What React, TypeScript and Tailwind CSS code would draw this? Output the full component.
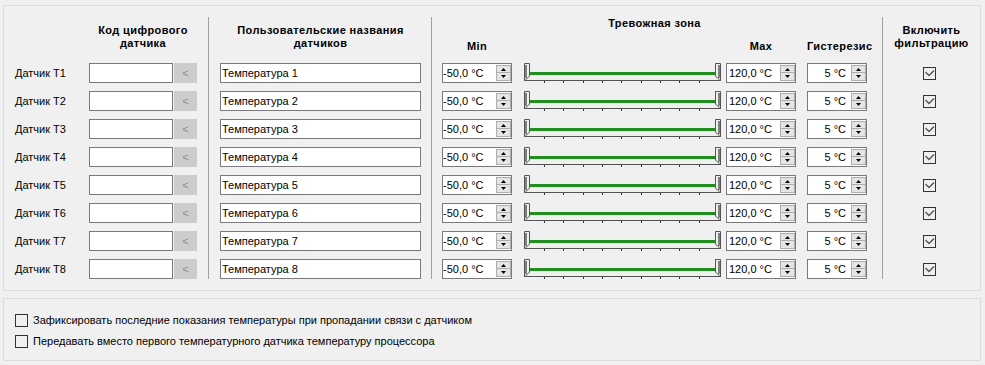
import React from 'react';

const rows = [1, 2, 3, 4, 5, 6, 7, 8];

function Arrows() {
  return (
    <div className="my-[1px] flex w-[15px] flex-col">
      <div className="flex h-[8px] items-center justify-center border border-[#adadad] bg-[#e5e5e5]">
        <svg width="5" height="3" viewBox="0 0 5 3" className="block">
          <path d="M2.5 0 L5 3 L0 3 Z" fill="#000" />
        </svg>
      </div>
      <div className="flex h-[8px] items-center justify-center border border-t-0 border-[#adadad] bg-[#e5e5e5]">
        <svg width="5" height="3" viewBox="0 0 5 3" className="block">
          <path d="M0 0 L5 0 L2.5 3 Z" fill="#000" />
        </svg>
      </div>
    </div>
  );
}

function Spin({ value, box, text }: { value: string; box: string; text: string }) {
  return (
    <div className={box}>
      <div className={text}>{value}</div>
      <Arrows />
    </div>
  );
}

function Slider() {
  const ticks = [1, 2, 3, 4, 5, 6, 7, 8, 9].map((i) => Math.round(0.67 + i * 19.33) + 0.5);
  return (
    <svg width="197" height="20" viewBox="0 0 197 20" className="block">
      <line x1="0" y1="17.5" x2="197" y2="17.5" stroke="#555" />
      {ticks.map((x) => (
        <line key={x} x1={x} y1="18" x2={x} y2="20" stroke="#333" />
      ))}
      <rect x="6" y="9" width="185" height="3" fill="#1f8d1f" />
      <path d="M0.5 17.5 V0.5 H5.5 V13 L1 17.5 Z" fill="#f0f0f0" stroke="#555" />
      <path d="M2 15 V2" stroke="#111" />
      <path d="M196.5 17.5 V0.5 H191.5 V13 L196 17.5 Z" fill="#f0f0f0" stroke="#555" />
      <path d="M195 15 V2" stroke="#111" />
    </svg>
  );
}

function Check({ checked }: { checked: boolean }) {
  return (
    <div className="h-[13px] w-[13px] shrink-0 border border-[#333] bg-[#f0f0f0]">
      {checked && (
        <svg width="11" height="11" viewBox="0 0 11 11" className="block">
          <polyline points="1.5,4 5,7.5 10,2.5" fill="none" stroke="#555" strokeWidth="1.4" />
        </svg>
      )}
    </div>
  );
}

function Sep({ cls }: { cls: string }) {
  return <div className={cls} />;
}

export default function App() {
  return (
    <div className="min-h-[365px] w-[985px] bg-[#f0f0f0] pl-[3px] pt-[5px] font-['Liberation_Sans',Arial,sans-serif] text-[11px] leading-[13px] text-black">
      {/* top group */}
      <div className="flex h-[286px] w-[978px] border border-[#dcdcdc] pb-[11px] pl-[11px] pt-[11px]">
        {/* labels */}
        <div className="flex w-[74px] flex-col gap-[8px]">
          <div className="h-[38px]" />
          {rows.map((r) => (
            <div key={r} className="flex h-[20px] items-center">
              Датчик T{r}
            </div>
          ))}
        </div>
        {/* code */}
        <div className="flex w-[108px] flex-col gap-[8px]">
          <div className="h-[38px] pt-[7px] text-center font-bold tracking-[0.4px]">
            Код цифрового
            <br />
            датчика
          </div>
          {rows.map((r) => (
            <div key={r} className="flex h-[20px]">
              <div className="h-[20px] w-[84px] border border-[#7a7a7a] bg-white" />
              <div className="ml-[1px] flex h-[20px] w-[23px] items-center justify-center bg-[#cccccc] text-[#8a8a8a]">
                &lt;
              </div>
            </div>
          ))}
        </div>
        <Sep cls="ml-[11px] mr-[11px] w-[1px] bg-[#a0a0a0]" />
        {/* names */}
        <div className="flex w-[201px] flex-col gap-[8px]">
          <div className="h-[38px] pt-[7px] text-center font-bold tracking-[0.4px]">
            Пользовательские названия
            <br />
            датчиков
          </div>
          {rows.map((r) => (
            <div key={r} className="flex h-[20px] items-center border border-[#7a7a7a] bg-white pl-[1px]">
              Температура {r}
            </div>
          ))}
        </div>
        <Sep cls="ml-[10px] mr-[10px] w-[1px] bg-[#a0a0a0]" />
        {/* alarm */}
        <div className="flex w-[425px] flex-col gap-[8px]">
          <div className="flex h-[38px] flex-col font-bold tracking-[0.4px]">
            <div className="text-center">Тревожная зона</div>
            <div className="mt-[10px] flex">
              <div className="w-[70px] text-center">Min</div>
              <div className="ml-[12px] w-[197px]" />
              <div className="ml-[5px] w-[70px] text-center">Max</div>
              <div className="ml-[11px] w-[60px] text-center">Гистерезис</div>
            </div>
          </div>
          {rows.map((r) => (
            <div key={r} className="flex h-[20px]">
              <Spin
                value="-50,0 °C"
                box="flex h-[20px] w-[70px] border border-[#7a7a7a] bg-white"
                text="flex flex-1 items-center pl-[0px]"
              />
              <div className="ml-[12px]">
                <Slider />
              </div>
              <div className="ml-[5px]">
                <Spin
                  value="120,0 °C"
                  box="flex h-[20px] w-[70px] border border-[#7a7a7a] bg-white"
                  text="flex flex-1 items-center pl-[2px]"
                />
              </div>
              <div className="ml-[11px]">
                <Spin
                  value="5 °C"
                  box="flex h-[20px] w-[60px] border border-[#7a7a7a] bg-white"
                  text="flex flex-1 items-center justify-end pr-[5px]"
                />
              </div>
            </div>
          ))}
        </div>
        <Sep cls="ml-[15px] w-[1px] bg-[#a0a0a0]" />
        {/* filter */}
        <div className="flex w-[97px] flex-col gap-[8px]">
          <div className="h-[38px] pt-[7px] text-center font-bold tracking-[0.4px]">
            Включить
            <br />
            фильтрацию
          </div>
          {rows.map((r) => (
            <div key={r} className="flex h-[20px] items-center pl-[40px]">
              <Check checked />
            </div>
          ))}
        </div>
      </div>
      {/* bottom group */}
      <div className="mt-[7px] flex h-[63px] w-[978px] flex-col gap-[8px] border border-[#dcdcdc] pl-[11px] pt-[15px]">
        <div className="flex h-[13px] items-center gap-[5px]">
          <Check checked={false} />
          <span>Зафиксировать последние показания температуры при пропадании связи с датчиком</span>
        </div>
        <div className="flex h-[13px] items-center gap-[5px]">
          <Check checked={false} />
          <span>Передавать вместо первого температурного датчика температуру процессора</span>
        </div>
      </div>
    </div>
  );
}
